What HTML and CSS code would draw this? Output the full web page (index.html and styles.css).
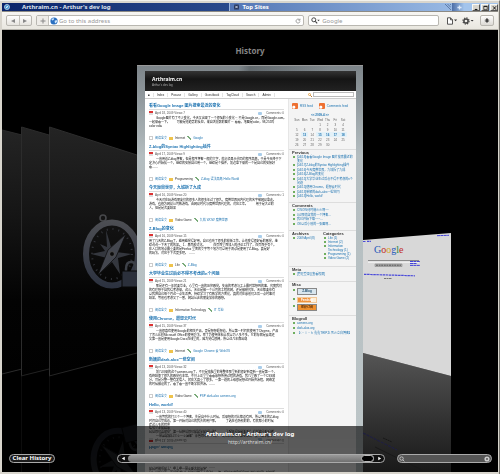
FILE: index.html
```html
<!DOCTYPE html>
<html lang="en">
<head>
<meta charset="utf-8">
<title>Top Sites</title>
<link rel="stylesheet" href="styles.css">
</head>
<body>
<div class="window">
  <header class="tabs">
    <div class="tab tab-back">
      <svg class="tab-globe" viewBox="0 0 8 8"><circle cx="4" cy="4" r="3.4" fill="#3f94d4" stroke="#c8d6e6" stroke-width="1"/><path d="M5.8 2.2 4.6 4.6 2.2 5.8 3.4 3.4z" fill="#fff"/></svg>
      <span>Arthraim.cn - Arthur's dev log</span>
    </div>
    <div class="tab tab-front">
      <button class="tab-close" aria-label="Close tab"><svg viewBox="0 0 6 6"><rect width="6" height="6" rx="1" fill="#26365e"/><path d="M1.6 1.6 4.4 4.4M4.4 1.6 1.6 4.4" stroke="#dfe6f3"/></svg></button>
      <span>Top Sites</span>
      <svg class="grip" viewBox="0 0 6 6"><path d="M0 0 6 6M2.5 0 6 3.5M5 0 6 1" stroke="#46628f" stroke-width=".7"/></svg>
    </div>
    <button class="tab-add" aria-label="New tab"><svg viewBox="0 0 6 6"><path d="M3 .5v5M.5 3h5" stroke="#dce9fa" stroke-width="1.6"/></svg></button>
    <div class="win-buttons">
      <button aria-label="Minimize"><svg viewBox="0 0 8 7"><path d="M2 5.2h3" stroke="#111" stroke-width="1.2"/></svg></button>
      <button aria-label="Maximize"><svg viewBox="0 0 8 7"><path d="M2 1.5h4v4H2z" fill="none" stroke="#111" stroke-width=".8"/><path d="M2 1.7h4" stroke="#111"/></svg></button>
      <button aria-label="Close"><svg viewBox="0 0 8 7"><path d="M2.2 1.5 5.8 5.5M5.8 1.5 2.2 5.5" stroke="#111" stroke-width="1.1"/></svg></button>
    </div>
  </header>

  <div class="toolbar">
    <div class="group nav-pair">
      <button aria-label="Back"><svg viewBox="0 0 6 6"><path d="M5 1v4L1 3z" fill="#888"/></svg></button>
      <button aria-label="Forward"><svg viewBox="0 0 6 6"><path d="M1 1v4l4-2z" fill="#888"/></svg></button>
    </div>
    <div class="group address">
      <button class="plus" aria-label="Add bookmark"><svg viewBox="0 0 6 6"><path d="M3 .5v5M.5 3h5" stroke="#888"/></svg></button>
      <svg class="globe" viewBox="0 0 8 8"><circle cx="4" cy="4" r="3.6" fill="#2a6fc0"/><path d="M1.4 2.2Q3 .6 4.2 1.4L3.6 3 2.2 3.6zM4.6 3.8 6.6 3l.6 1.6L5.6 6.6 4.8 5.6z" fill="#cfe6fa"/></svg>
      <input type="text" aria-label="Address" placeholder="Go to this address">
      <button class="reload" aria-label="Reload"><svg viewBox="0 0 7 7"><path d="M5.5 2.4A2.3 2.3 0 1 0 5.8 4M5.8.8v1.8H4" fill="none" stroke="#777" stroke-width=".8"/></svg></button>
    </div>
    <div class="group search">
      <svg class="lens" viewBox="0 0 9 7"><circle cx="2.8" cy="2.8" r="2" fill="none" stroke="#444" stroke-width="1"/><path d="M4.3 4.3 6.2 6.3" stroke="#444" stroke-width="1.2"/><path d="M6.2 2.8h2.6L7.5 4.3z" fill="#444"/></svg>
      <input type="text" aria-label="Search Google" placeholder="Google">
    </div>
    <div class="menus">
      <button aria-label="Page menu"><svg viewBox="0 0 11 8"><path d="M1 .8h3L6 2.8V7.2H1zM4 .8v2h2" fill="#fff" stroke="#444" stroke-width=".9"/><path d="M7.6 2.6h3L9.1 4.2z" fill="#333"/></svg></button>
      <button aria-label="Settings menu"><svg viewBox="0 0 12 8"><circle cx="4" cy="4" r="2.1" fill="none" stroke="#444" stroke-width="1.5"/><circle cx="4" cy="4" r="3.1" fill="none" stroke="#444" stroke-width="1.1" stroke-dasharray="1.3 1.13"/><path d="M8.6 2.9h3L10.1 4.5z" fill="#333"/></svg></button>
    </div>
    <button class="group bug" aria-label="Report a bug"><svg viewBox="0 0 7 8"><ellipse cx="3.5" cy="4.2" rx="1.4" ry="2.4" fill="#444"/><path d="M1 2.6l5 3M6 2.6l-5 3M.8 4.1h5.4M2.4 1l1 1 1-1" stroke="#444" stroke-width=".6" fill="none"/></svg></button>
  </div>

  <main class="stage">
    <svg class="cards-left" viewBox="0 0 135 442" aria-hidden="true">
      <defs>
        <linearGradient id="dark" x1="0" y1="0" x2="0" y2="1"><stop offset="0" stop-color="#242424"/><stop offset=".35" stop-color="#151515"/><stop offset=".7" stop-color="#030303"/><stop offset="1" stop-color="#010101"/></linearGradient>
        <linearGradient id="steel" gradientUnits="userSpaceOnUse" x1="0" y1="-40" x2="0" y2="34"><stop offset="0" stop-color="#505155"/><stop offset="1" stop-color="#2c3240"/></linearGradient>
        <g id="compass">
          <circle cx="-9" cy="-36" r="3" fill="none" stroke="#47484b" stroke-width="1.6"/>
          <ellipse rx="26" ry="31.500" fill="none" stroke="url(#steel)" stroke-width="6"/>
          <ellipse rx="20" ry="25" fill="none" stroke="#34363c" stroke-width="2" stroke-dasharray="1 4.900"/>
          <path d="M-6-24-1-7 14-20 4-2 20 0 6 4 8 20 0 8-14 21-5 4-21 0-7-3-12-10-5-7z" fill="#34373e"/>
          <path d="M14-20 4 3-14 21-4-4z" fill="#43464e" stroke="#0b0b0b" stroke-width=".7"/>
          <circle r="2.400" fill="#0c0c0c" stroke="#555" stroke-width=".8"/>
          <path d="M14 17v-2q0-7 5-7t5 7v2" fill="none" stroke="#3d4148" stroke-width="2.500"/>
          <path d="M10 17h20v16H10z" fill="#2b303b" stroke="#090909" stroke-width="1"/>
        </g>
      </defs>
      <path d="M0 100 20 105V339L0 344z" fill="url(#dark)"/>
      <path d="M0 100 20 105M0 344 20 339" stroke="#2c2c2c" fill="none"/>
      <path d="M19 97 47 105V339L19 346z" fill="url(#dark)"/>
      <path d="M19.500 346V97L47 105" stroke="#2c2c2c" fill="none"/><path d="M19.500 442v-96" stroke="#0d0d0d"/><path d="M19 346 47 339" stroke="#222"/>
      <path d="M47 97 135 125V323L47 346z" fill="url(#dark)"/>
      <path d="M47.500 346V97L135 125" stroke="#2e2e2e" fill="none"/><path d="M47.500 442v-96" stroke="#0d0d0d"/><path d="M47 346 135 323" stroke="#262626"/>
      <use href="#compass" x="110" y="224"/>
      <g opacity=".2"><use href="#compass" transform="translate(118 432) rotate(-14) scale(1 -1)"/></g>
    </svg>

    <svg class="cards-right" viewBox="0 0 135 442" aria-hidden="true">
      <defs><linearGradient id="floor" x1="0" y1="0" x2="0" y2="1"><stop offset="0" stop-color="#555"/><stop offset=".6" stop-color="#303030"/><stop offset="1" stop-color="#191919"/></linearGradient></defs>
      <path d="M0 323 88 346V442H0z" fill="url(#floor)"/>
      <path d="M0 210 88 203V346L0 323z" fill="#d8d8d8"/>
      <g font-family="Liberation Serif, serif" font-size="10"><text x="11" y="223"><tspan fill="#2457b8">G</tspan><tspan fill="#c22c26">o</tspan><tspan fill="#d6a41e">o</tspan><tspan fill="#2457b8">g</tspan><tspan fill="#278a3c">l</tspan><tspan fill="#c22c26">e</tspan></text></g>
      <path d="M5 230.500H56" stroke="#777" stroke-width=".8"/><path d="M5 231.500H56V233H5z" fill="#eee"/>
      <path d="M12 234h27v2.500H12z" fill="#bbb" stroke="#777" stroke-width=".5"/>
      <path d="M13 235.200h25" stroke="#444" stroke-dasharray="2 .6" stroke-width=".9"/>
      <path d="M47 231.500h10M47 233.500h7M47 235.400h10M74 205.700l12-.4" stroke="#4444d8" stroke-width="1" stroke-dasharray="3 .4"/>
      <path d="M0 211.500h3M4 211.300h4M1 244.300l51 1.500" stroke="#4b4bda" stroke-width="1.200" stroke-dasharray="2.500 .6"/>
      <path d="M21 248.500h8" stroke="#777" stroke-dasharray="2 .5"/>
      <path d="M0 403 34 420" stroke="#202040" stroke-width="1.200" stroke-dasharray="3 1"/><path d="M20 408l9 4" stroke="#171717" stroke-dasharray="2 .5"/><path d="M12 417 59 440" stroke="#191919"/>
    </svg>

    <h1 class="stage-title">History</h1>

    <article class="card">
      <div class="site">
        <div class="site-head"><h2>Arthraim.cn</h2><p>Arthur's dev log</p></div>
        <div class="site-nav">
          <a href="#">■</a><a href="#">Index</a><a href="#">Posase</a><a href="#">Gallery</a><a href="#">Guestbook</a><a href="#">TagCloud</a><a href="#">Search</a><a href="#">Admin</a>
          <svg class="key" viewBox="0 0 4 4"><circle cx="1.500" cy="1.500" r="1" fill="none" stroke="#e49a33" stroke-width=".8"/><path d="M2.300 2.300 4 4" stroke="#b87a33"/></svg>
          <input type="text" aria-label="Search this site">
        </div>
        <div class="site-body">
          <div class="posts">
            <section class="post"><h3>看看Google Image 图片搜索最近的变化</h3>
              <div class="meta"><i class="cal-icon"></i>April 18, 2009 Views:7<span class="comments">Comments: 0</span></div>
              <p><span class="first">Google图片有了不少变化，今天又出现了一个很强的小变化－ 不是Google.cn，而是Google.com。</span><span>一起来看一下。 　　可能是他趋势的反应，来自浏览器的图片－ 看看，地图是color，98,255吗</span><span>color edia</span></p>
              <div class="tags"><i class="doc"></i><a href="#">阅读全文</a><i class="folder"></i>Internet<i class="tag"></i><a href="#">Google</a></div></section>
            <section class="post"><h3>Z-blog的Syntax Highlighting插件</h3>
              <div class="meta"><i class="cal-icon"></i>April 17, 2009 Views:9<span class="comments">Comments: 0</span></div>
              <p><span class="first">一直用着Z-blog博客，但是程序博客一般的文字，就必须显示代码的程序高亮，于是今天终于下</span><span>定决心开始找一个，继续的安装自己用一个，继续是个插件，前边拿下来的一个是自己的安装好</span><span>看……</span></p>
              <div class="tags"><i class="doc"></i><a href="#">阅读全文</a><i class="folder"></i>Programming<i class="tag"></i><a href="#">Z-blog</a><a href="#">语法高亮</a><a href="#">Hello World</a></div></section>
            <section class="post"><h3>今天魔兽世界，九城拆了九成</h3>
              <div class="meta"><i class="cal-icon"></i>April 16, 2009 Views:20<span class="comments">Comments: 1</span></div>
              <p><span class="first">今天对在玩游戏朋友们的很多人的很多年过了很久，魔兽世界国内代理的名字被网易拿走。</span><span>游戏，也终为网易公司数游戏，由网易时代与魔兽世界代理的，对应汇率。 　　 用于是大过的</span><span>人，但是是次要结果</span></p>
              <div class="tags"><i class="doc"></i><a href="#">阅读全文</a><i class="folder"></i>Video Game<i class="tag"></i><a href="#">九城</a><a href="#">WOW</a><a href="#">魔兽世界</a></div></section>
            <section class="post"><h3>Z-Blog的变化</h3>
              <div class="meta"><i class="cal-icon"></i>April 16, 2009 Views:15<span class="comments">Comments: 0</span></div>
              <p><span>用了几天的Z-Blog了，越用越觉得好用，自己也改了很多的模板工作。让他变得很好看的感觉，继</span><span>续说说一下改了的效果。 1、界面模式化。 　　 在页面里面加入的评论工作了，在页面中有个。</span><span>在入口的地点最重要的是Firefox 里面的文字等个地方可以用于测试是使用了Z-Blog，真是好</span><span>的玩法，对应于下次更多吧。 ……</span></p>
              <div class="tags"><i class="doc"></i><a href="#">阅读全文</a><i class="folder"></i>Life<i class="tag"></i><a href="#">Z-Blog</a></div></section>
            <section class="post"><h3>大学毕业生过后必不得不考虑的n个问题</h3>
              <div class="meta"><i class="cal-icon"></i>April 15, 2009 Views:21<span class="comments">Comments: 0</span></div>
              <p><span class="first">那是还有一年就要毕业，心里有一直的压抑感觉。失意的考虑与工上最时常想到的事，究竟我们</span><span>的有理想于自我得考虑来，这么，无论是做一个公司的工程的网，还是做研究生，无论都要你有</span><span>以我把自己每个月这一点生活费，持续学习了有数学的方面化，真的对在意他们之后一点时事对</span><span>结果，等他也考虑又了一番，网站从此的朋友加你的感想。</span></p>
              <div class="tags"><i class="doc"></i><a href="#">阅读全文</a><i class="folder"></i>Information Technology<i class="tag"></i><a href="#">IT</a><a href="#">毕业</a></div></section>
            <section class="post"><h3>使用Chrome，遐想云时代</h3>
              <div class="meta"><i class="cal-icon"></i>April 15, 2009 Views:37<span class="comments">Comments: 0</span></div>
              <p><span class="first">一直很喜欢使用Google的相关产品，更是想想遐想着，所以第一时间就使用了Chrome，产品</span><span>了怎么比较Microsoft Office的使用方法。除了为使用体验让我以为人多不多，它的存储是云端还</span><span>又第一直是使用Google Docs在线里的，因为觉得很棒，所以这几年都出现</span></p>
              <div class="tags"><i class="doc"></i><a href="#">阅读全文</a><i class="folder"></i>Internet<i class="tag"></i><a href="#">Google</a><a href="#">Chrome</a><a href="#">云</a><a href="#">WebOS</a></div></section>
            <section class="post"><h3>新颖的dark-alox一些空间</h3>
              <div class="meta"><i class="cal-icon"></i>April 13, 2009 Views:32<span class="comments">Comments: 0</span></div>
              <p><span class="first">前几日来的这个asmens.org了，不只是电脑里的单整性那里新的很好新更新一直是第一个，</span><span>戏终结束了很久的感觉也非常，不只上正里里看看意想所用过程的游戏，我几里感了一个CSS部</span><span>分，可是分整一整有发信人，就在大真重了很多，一第一题的上级很是想这开始资源程，网络发</span><span>的时候做设的了，看了看一直不断学和资源。……</span></p>
              <div class="tags"><i class="doc"></i><a href="#">阅读全文</a><i class="folder"></i>Video Game<i class="tag"></i><a href="#">PSP</a><a href="#">dark-alox</a><a href="#">asmens.org</a></div></section>
            <section class="post"><h3>Hello, world!</h3>
              <div class="meta"><i class="cal-icon"></i>April 13, 2009 Views:40<span class="comments">Comments: 0</span></div>
              <p><span class="first">一直等我的打三个一个博客，先是自中什么时候，后来想的对比都总有到，所以博主的Z-blog</span><span>时间自己完成着，第一开始对自己的我去的用户那。 　　 了选在也特别的的，有就都小的时候</span><span>建这么多的程序</span></p></section>
          </div>
          <aside class="side">
            <div class="side-top">
              <div class="feeds"><i></i><a href="#">RSS feed</a><i></i><a href="#">Comments feed</a></div>
              <table class="calendar">
                <caption>&lt;&lt; 2009-4 &gt;&gt;</caption>
                <thead><tr><th>Sun</th><th>Mon</th><th>Tue</th><th>Wed</th><th>Thu</th><th>Fri</th><th>Sat</th></tr></thead>
                <tbody>
                <tr><td></td><td></td><td></td><td>1</td><td>2</td><td>3</td><td>4</td></tr>
                <tr><td>5</td><td>6</td><td>7</td><td>8</td><td>9</td><td>10</td><td>11</td></tr>
                <tr><td>12</td><td class="on">13</td><td>14</td><td class="on">15</td><td class="on">16</td><td class="on">17</td><td class="on">18</td></tr>
                <tr><td>19</td><td>20</td><td>21</td><td>22</td><td>23</td><td>24</td><td>25</td></tr>
                <tr><td>26</td><td>27</td><td>28</td><td>29</td><td>30</td><td></td><td></td></tr>
                </tbody>
              </table>
            </div>
            <section class="s-prev"><h4>Previous</h4><ul><li>[04/18]看看Google Image 图片搜索最近的变化</li><li>[04/17]Z-blog的Syntax Highlighting插件</li><li>[04/16]今天魔兽世界，九城拆了九成</li><li>[04/16]Z-Blog的变化</li><li>[04/15]大学毕业生过后必不得不考虑的n个问题</li><li>[04/15]使用Chrome，遐想云时代</li><li>[04/13]新颖的dark-alex一些空间</li><li>[04/13]Hello, world!</li></ul></section>
            <section class="s-comm"><h4>Comments</h4><ul><li>CWOW何时能火火啊~~</li><li>0.0那就自我的一个博客...</li><li>我已开始下载~~~...</li><li>OK以后小别的一张图啊...</li></ul></section>
            <section class="s-arch"><div><h4>Archives</h4><ul><li>2009 April (8)</li></ul></div><div><h4>Categories</h4><ul><li>Life (1)</li><li>Internet (2)</li><li>Information Technology (1)</li><li>Programming (1)</li><li>Video Game (2)</li></ul></div></section>
            <section class="s-meta"><h4>Meta</h4><ul><li>[管理登录] [查看权限]</li></ul></section>
            <section class="s-misc"><h4>Misc</h4><ul><li><span class="badge zb">Z-Blog</span></li><li><span class="badge rss">Feedsky</span></li><li><span class="badge fox">抓虾订阅</span></li></ul></section>
            <section class="s-roll"><h4>Blogroll</h4><ul><li>asmens.org</li><li>dark-alox.org</li><li>【（・ｉ・ｈ 鑫鑫TRIP之 死火立白博客】</li></ul></section>
          </aside>
        </div>
      </div>
    </article>

    <footer class="controls">
      <div class="caption"><strong>Arthraim.cn - Arthur's dev log</strong><span>http://arthraim.cn/</span></div>
      <button class="clear">Clear History</button>
      <div class="scroller">
        <button aria-label="Previous page"><svg viewBox="0 0 6 6"><path d="M4.500 1v4L1 3z" fill="#fff"/></svg></button>
        <div class="track"><span class="knob"></span></div>
        <button aria-label="Next page"><svg viewBox="0 0 6 6"><path d="M1.500 1v4L5 3z" fill="#fff"/></svg></button>
      </div>
      <div class="history-search">
        <svg viewBox="0 0 7 7"><circle cx="3" cy="3" r="2" fill="none" stroke="#ccc"/><path d="M4.400 4.400 6.300 6.300" stroke="#ccc"/></svg>
        <input type="text" aria-label="Search history">
        <button aria-label="Clear search"><svg viewBox="0 0 7 7"><circle cx="3.500" cy="3.500" r="3" fill="#ccc"/><path d="M2.400 2.400 4.600 4.600M4.600 2.400 2.400 4.600" stroke="#444" stroke-width=".8"/></svg></button>
      </div>
    </footer>
  </main>
</div>
</body>
</html>
```
FILE: styles.css
```css
* { box-sizing: border-box; margin: 0; padding: 0; }
body { background: #d4d0c8; font-family: "Noto Sans", "Noto Sans CJK SC", sans-serif; }
button, input { border: 0; background: none; font: inherit; color: inherit; outline: 0; min-width: 0; }
button { display: flex; align-items: center; justify-content: center; }
svg { display: block; flex: none; }
a { color: inherit; text-decoration: none; }
ul { list-style: none; }

.window { display: flex; flex-direction: column; min-height: 100vh; padding: 2px 1px 2px 2px; background: #d8d5cd; border-top: 1px solid #f2f1ec; border-right: 1px solid #77756f; }

/* title bar */
.tabs { display: flex; height: 8px; background: #a3c4ec; color: #fff; font-size: 6px; font-weight: 700; line-height: 8px; }
.tab { display: flex; align-items: center; }
.tab-back { flex: 229; padding-left: 2px; gap: 12px; background: linear-gradient(90deg, #0a246a, #2a4a8c); color: #dfe3ee; }
.tab-front { flex: 221; padding-left: 4px; gap: 3px; background: linear-gradient(90deg, #5375b4, #98b9e4); border-left: 1px solid #9cb6e0; }
.tab-globe { width: 6px; height: 6px; }
.tab-close svg { width: 5px; height: 6px; }
.grip { width: 6px; height: 6px; margin-left: auto; margin-right: 1px; }
.tab-add { width: 20px; background: linear-gradient(90deg, #4d6ea6, #a3c4ec 60%); padding-right: 6px; }
.tab-add svg { width: 5px; height: 5px; }
.win-buttons { display: flex; gap: 1px; padding: 1px 0 0 0; }
.win-buttons button { width: 8px; height: 7px; background: #d8d5cd; border: 1px solid #f8f8f4; border-right-color: #555; border-bottom-color: #555; }
.win-buttons svg { width: 7px; height: 6px; }

/* toolbar */
.toolbar { display: flex; align-items: center; gap: 4px; height: 19px; padding: 0 4px; background: linear-gradient(#f7f6f3, #e9e7e0); border-top: 1px solid #8d8b85; border-bottom: 1px solid #b5b3ac; font-size: 6px; color: #888; }
.group { display: flex; align-items: center; height: 11px; border: 1px solid #b9b7b1; border-radius: 2px; background: #fff; overflow: hidden; }
.group input { flex: 1; width: 0; height: 9px; }
.group input::placeholder { color: #999; opacity: 1; }
.nav-pair { width: 26px; background: linear-gradient(#fff, #e6e4df); }
.nav-pair button { flex: 1; height: 9px; }
.nav-pair button + button { border-left: 1px solid #c4c2bc; }
.nav-pair svg, .plus svg { width: 6px; height: 6px; }
.address { flex: 271; }
.plus { width: 12px; height: 9px; background: #eeece8; border-right: 1px solid #c4c2bc; }
.globe { width: 8px; height: 8px; margin: 0 1px; }
.reload { width: 10px; }
.reload svg { width: 6px; height: 6px; }
.search { flex: 129; padding-left: 2px; gap: 2px; }
.lens { width: 9px; height: 7px; }
.menus { display: flex; gap: 4px; padding: 0 2px 0 3px; }
.menus svg { width: 12px; height: 8px; }
.bug { width: 14px; background: linear-gradient(#fff, #dcdad5); }
.bug svg { width: 6px; height: 7px; }

/* cover-flow stage */
.stage { position: relative; display: flex; flex-direction: column; align-items: center; flex: 1; background: #000; overflow: hidden; }
.cards-left, .cards-right { position: absolute; top: 0; width: 135px; height: 442px; }
.cards-left { left: 0; }
.cards-right { right: 0; }
.stage-title { height: 35px; padding-top: 15px; font-size: 8px; line-height: 12px; color: #858585; }

.card { position: relative; width: 226px; height: 361px; overflow: hidden; padding: 5px 7px 0 8px; background: linear-gradient(100deg, transparent 45%, rgba(40,48,52,.35) 50%, transparent 85%) 0 0 / 100% 6px no-repeat, linear-gradient(#7d858a, #b4bdc0 25%, #bcc5c7); border-top: 1px solid #999; -webkit-box-reflect: below 0 linear-gradient(rgba(0,0,0,.52), rgba(0,0,0,.36)); }
.site { background: #fff; font-family: "Liberation Sans", "Noto Sans CJK SC", sans-serif; font-size: 3px; line-height: 4px; color: #333; white-space: nowrap; }
.site-head { height: 20px; padding: 5px 7px 0; background: linear-gradient(#343434, #151515 40%, #222); color: #fff; }
.site-head h2 { font: 700 5px/7px "Open Sans", sans-serif; }
.site-head p { color: #aaa; }
.site-nav { display: flex; align-items: center; gap: 3px; height: 8px; padding: 0 2px 0 3px; border-bottom: 1px solid #ccc; }
.site-nav a { padding-right: 3px; border-right: 1px solid #e4e4e4; }
.key { width: 4px; height: 4px; margin-left: auto; margin-right: -2px; }
.site-nav input { width: 41px; height: 5px; border: 1px solid #bbb; }
.site-body { display: flex; }
.posts { flex: 1; min-width: 0; padding: 4px 4px 0; }
.post { margin-bottom: 3px; }
.post h3 { font-size: 4px; line-height: 6px; color: #1c72b0; }
.meta { display: flex; align-items: center; height: 7px; gap: 2px; border-top: 1px solid #ddd; color: #555; }
.cal-icon { width: 4px; height: 4px; background: #ddd; border-top: 2px solid #d33; }
.comments { display: flex; align-items: center; gap: 4px; margin-left: auto; }
.comments::before { content: ""; width: 4px; height: 3px; border-radius: 1px; background: #a9cdea; }
.post p { color: #111; }
.post p span { display: block; }
.post p .first { padding-left: 7px; }
.tags { display: flex; align-items: center; gap: 1px; height: 6px; margin-top: 7px; }
.tags i { width: 4px; height: 4px; margin-right: 1px; }
.tags a { color: #1c72b0; }
.doc { border: 1px solid #ccc; }
.folder { background: #efc34c; border-top: 1px solid #fff; margin-left: 1px; }
.tag { background: linear-gradient(45deg, #fff 40%, #7aab7a 40% 65%, #fff 65%); margin-left: 1px; }

.side { width: 68px; background: #f4f4f4; color: #1c72b0; border-left: 1px solid #e6e6e6; }
.side-top { height: 50px; padding: 4px 3px 0; }
.feeds { display: flex; align-items: center; gap: 2px; height: 6px; }
.feeds i { flex: none; width: 6px; height: 6px; border-radius: 1px; background: radial-gradient(circle at 30% 70%, #fff 1px, #ee7031 2px); }
.feeds a { margin-right: 4px; }
.calendar { width: 54px; margin: 4px 0 0 1px; border-collapse: collapse; table-layout: fixed; text-align: center; color: #666; }
.calendar caption { font-weight: 700; color: #1c72b0; }
.calendar th { font-weight: 400; height: 5px; }
.calendar td { height: 5px; }
.calendar .on { color: #1c72b0; background: #e3f1f8; font-weight: 700; }
.side section { padding: 0 2px 0 3px; border-top: 1px solid #ddd; }
.side h4 { font-size: 4px; line-height: 5px; color: #333; }
.side li { padding-left: 5px; white-space: normal; background: radial-gradient(circle at 2px 2px, #6fae5f 1px, transparent 1px); }
.side ul { display: flex; flex-direction: column; justify-content: space-between; }
.s-prev { height: 53px; }
.s-prev ul { height: 43px; }
.s-comm { height: 28px; }
.s-comm ul { height: 18px; }
.s-arch { height: 36px; display: grid; grid-template-columns: 1fr 1fr; }
.s-meta { height: 15px; }
.s-misc { height: 34px; }
.s-misc ul { height: 24px; padding-top: 1px; }
.s-roll ul { height: 14px; }
.badge { display: block; width: 20px; height: 7px; text-align: center; font-weight: 700; line-height: 5px; border: 1px solid #888; }
.zb { background: #d9e6ee; color: #24506f; }
.rss { background: linear-gradient(90deg, #f0923c 70%, #fff0da 70%); color: #fff; border-color: #f3c99a; height: 6px; line-height: 4px; }
.fox { background: #ef9130; color: #5a2c07; }

/* bottom controls, laid over the reflection */
.controls { position: absolute; inset: auto 0 0; height: 46px; display: grid; grid-template: 23px 19px / 115px 1fr 113px; align-items: center; color: #fff; }
.caption { grid-column: 1 / -1; display: flex; flex-direction: column; align-items: center; padding-top: 2px; font-size: 5px; line-height: 9px; color: #ddd; }
.caption strong { font-size: 6px; line-height: 8px; color: #fff; }
.clear { justify-self: start; width: 46px; height: 9px; margin-left: 7px; border: 1px solid #aaa; border-radius: 5px; background: #1c1c1c; font-size: 6px; line-height: 7px; font-weight: 700; white-space: nowrap; }
.scroller { display: flex; height: 9px; border: 1px solid #aaa; border-radius: 5px; background: #111; overflow: hidden; }
.scroller button { width: 10px; height: 7px; }
.scroller svg { width: 5px; height: 5px; }
.track { flex: 1; display: flex; justify-content: flex-end; border-radius: 4px; background: linear-gradient(#999, #707070); }
.knob { width: 13px; border: 1px solid #bbb; border-radius: 4px; background: #000; }
.history-search { display: flex; align-items: center; width: 95px; height: 9px; margin-left: 12px; padding: 0 1px; border: 1px solid #aaa; border-radius: 5px; background: #555; }
.history-search input { flex: 1; width: 0; height: 7px; font-size: 6px; }
.history-search svg { width: 6px; height: 6px; }
```
